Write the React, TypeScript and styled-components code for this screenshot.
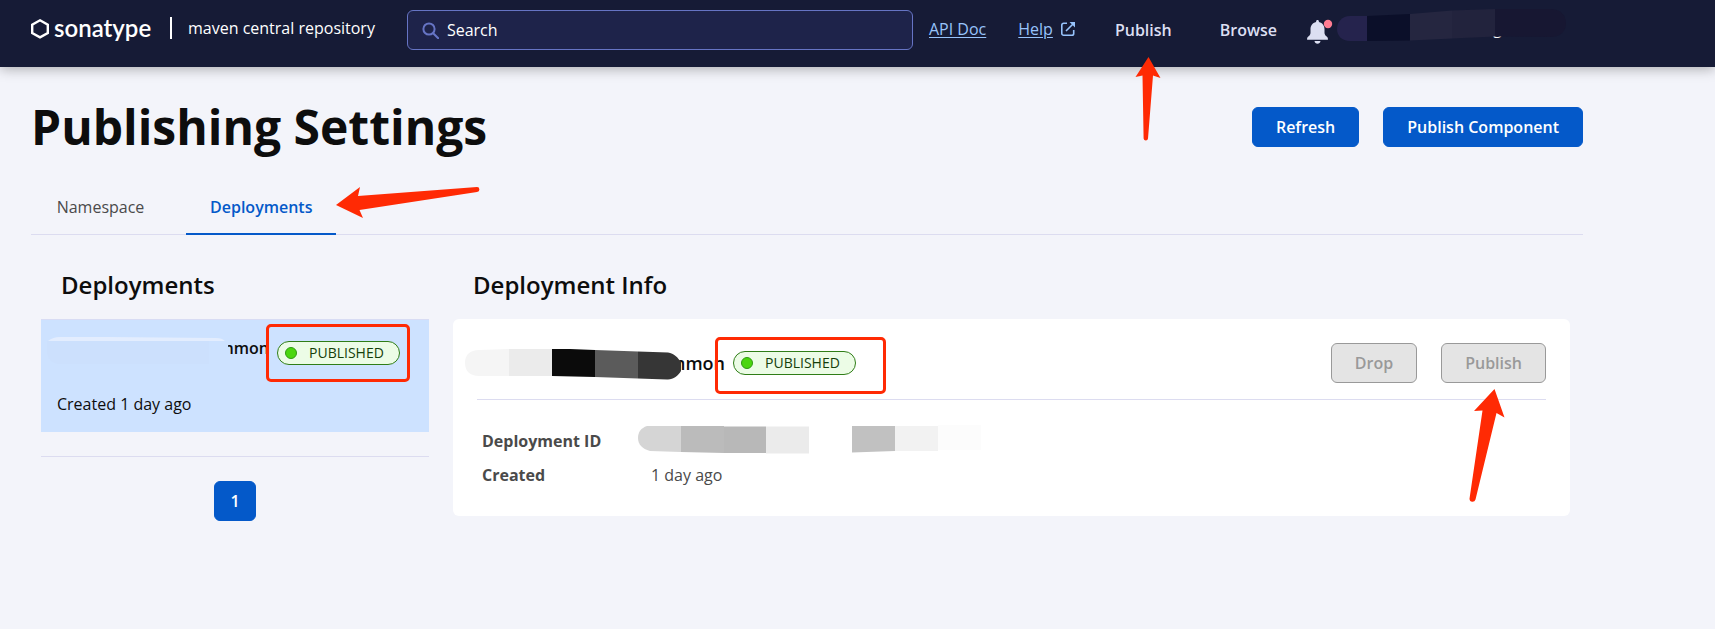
import React from "react";
import styled, { createGlobalStyle, css } from "styled-components";

const GlobalStyle = createGlobalStyle`
  *, *::before, *::after { box-sizing: border-box; }
  body {
    margin: 0;
    background: #f3f4fa;
    color: #0d0d0d;
    font-family: "Open Sans", "Noto Sans", sans-serif;
    font-size: 16px;
    line-height: 24px;
  }
  button, input { font: inherit; }
`;

/* ---------- Header ---------- */

const Header = styled.header`
  position: relative;
  z-index: 1;
  display: flex;
  align-items: flex-start;
  padding: 10px 132px 17px 31px;
  background: #161b36;
  box-shadow: 0 2px 12px rgba(0, 0, 0, 0.3);
  white-space: nowrap;
`;

const Brand = styled.a`
  display: flex;
  align-items: center;
  height: 36px;
  color: #fff;
  font-weight: 500;
  text-decoration: none;
`;

const BrandName = styled.span`
  width: 100px;
  margin-left: 5px;
  font-family: Lato, "Open Sans", sans-serif;
  font-size: 24px;
  font-weight: 600;
  line-height: 28px;
`;

const BrandDivider = styled.span`
  width: 2px;
  height: 22px;
  margin: 0 16px;
  background: #fff;
`;

const SearchBox = styled.label`
  display: flex;
  flex: 1;
  align-items: center;
  gap: 8px;
  min-width: 120px;
  height: 40px;
  margin-left: 32px;
  padding: 0 14px;
  border: 1px solid #6674c4;
  border-radius: 6px;
  background: #1e234a;
`;

const SearchInput = styled.input`
  flex: 1;
  min-width: 0;
  padding: 0;
  border: 0;
  outline: 0;
  background: transparent;
  color: #fff;
  font-weight: 500;
  &::placeholder { color: #fff; opacity: 1; }
`;

const Links = styled.div`
  display: flex;
  align-items: center;
  gap: 32px;
  height: 38px;
  margin-left: 16px;
`;

const TextLink = styled.a`
  color: #97c3fb;
  text-underline-offset: 2px;
`;

const HelpLink = styled.span`
  display: flex;
  align-items: center;
  gap: 8px;
`;

const Nav = styled.nav`
  display: flex;
  align-items: center;
  gap: 48px;
  height: 40px;
  margin-left: 40px;
`;

const NavLink = styled.a`
  position: relative;
  color: #dcdff2;
  font-weight: 600;
  text-decoration: none;
`;

const BellButton = styled.button`
  width: 30px;
  height: 32px;
  margin: 6px 0 0 29px;
  padding: 0;
  border: 0;
  background: none;
  svg { display: block; }
`;

const Account = styled.div`
  position: relative;
  width: 247px;
  height: 40px;
  padding: 6px 0 0 157px;
  color: #fff;
  svg { position: absolute; top: -2px; left: 0; }
`;

/* ---------- Page head and tabs ---------- */

const Main = styled.main`
  padding: 28px 132px 48px 31px;
`;

const PageHead = styled.div`
  display: flex;
  align-items: center;
  justify-content: space-between;
`;

const PageTitle = styled.h1`
  margin: 0;
  font-size: 48px;
  font-weight: 700;
  line-height: 64px;
`;

const ButtonRow = styled.div`
  display: flex;
  gap: 24px;
`;

const Button = styled.button`
  position: relative;
  height: 40px;
  padding: 0 23px;
  border: 1px solid #0459c9;
  border-radius: 6px;
  background: #0459c9;
  color: #fff;
  font-weight: 600;
  white-space: nowrap;
  &:disabled {
    border-color: #999;
    background: #e4e4e4;
    color: #999;
  }
`;

const PageButton = styled(Button)`
  width: 42px;
  padding: 0;
`;

const Tabs = styled.div`
  display: flex;
  gap: 16px;
  margin-top: 20px;
  border-bottom: 1px solid #dcdcf0;
`;

const Tab = styled.button<{ $active?: boolean }>`
  position: relative;
  min-width: 139px;
  margin-bottom: -1px;
  padding: 16px 24px 14px;
  border: 0;
  border-bottom: 2px solid transparent;
  background: none;
  color: #4a4a4a;
  ${({ $active }) =>
    $active &&
    css`
      border-color: #0459c9;
      color: #0459c9;
      font-weight: 600;
    `}
`;

/* ---------- Deployments ---------- */

const Columns = styled.div`
  display: grid;
  grid-template-columns: 388px minmax(0, 1fr);
  gap: 24px;
  margin-top: 34px;
  padding: 0 13px 0 10px;
`;

const SectionTitle = styled.h2`
  margin: 0 0 18px;
  padding-left: 20px;
  font-size: 24px;
  font-weight: 600;
  line-height: 32px;
`;

const List = styled.ul`
  margin: 0;
  padding: 0 0 24px;
  border-top: 1px solid #d8dcf4;
  border-bottom: 1px solid #dcdcf0;
  list-style: none;
`;

const Item = styled.li`
  padding: 16px;
  background: #cde2ff;
`;

const ItemHead = styled.div`
  display: flex;
  align-items: flex-start;
  gap: 8px;
  height: 34px;
  margin-bottom: 22px;
`;

const Name = styled.div<{ $large?: boolean }>`
  position: relative;
  flex: none;
  width: ${({ $large }) => ($large ? 248 : 212)}px;
  font-size: ${({ $large }) => ($large ? 18 : 16)}px;
  font-weight: 600;
  text-align: right;
`;

const Mask = styled.svg<{ $x: number; $y: number }>`
  position: absolute;
  left: ${({ $x }) => $x}px;
  top: ${({ $y }) => $y}px;
`;

const BadgeSlot = styled.div`
  position: relative;
  align-self: center;
`;

const Badge = styled.span`
  display: flex;
  align-items: center;
  gap: 12px;
  width: 123px;
  height: 24px;
  padding-left: 7px;
  border: 1px solid #2f7d17;
  border-radius: 12px;
  background: #ecfce6;
  color: #15400a;
  font-size: 14px;
  line-height: 20px;
  &::before {
    content: "";
    width: 12px;
    height: 12px;
    border: 1px solid #2f9a12;
    border-radius: 50%;
    background: #4bd60f;
  }
`;

const Highlight = styled.span<{ $wide?: boolean }>`
  position: absolute;
  top: ${({ $wide }) => ($wide ? -14 : -17)}px;
  left: ${({ $wide }) => ($wide ? -18 : -11)}px;
  width: ${({ $wide }) => ($wide ? 171 : 144)}px;
  height: ${({ $wide }) => ($wide ? 57 : 58)}px;
  border: 3px solid #ff2a04;
  border-radius: 5px;
  pointer-events: none;
`;

const Arrow = styled.svg<{ $x: number; $y: number }>`
  position: absolute;
  left: ${({ $x }) => $x}px;
  top: ${({ $y }) => $y}px;
  z-index: 2;
  fill: #ff2a04;
  pointer-events: none;
`;

const Pagination = styled.nav`
  display: flex;
  justify-content: center;
  margin-top: 24px;
`;

const Card = styled.div`
  padding: 24px 24px 0;
  border-radius: 6px;
  background: #fff;
`;

const CardHead = styled.div`
  display: flex;
  align-items: center;
  gap: 8px;
  padding-bottom: 16px;
  border-bottom: 1px solid #dcdcf0;
  ${ButtonRow} { margin-left: auto; }
`;

const Details = styled.dl`
  display: grid;
  grid-template-columns: 169px 1fr;
  row-gap: 10px;
  margin: 0;
  padding: 29px 5px;
  color: #4a4a4a;
  dt { font-weight: 700; }
  dd { position: relative; margin: 0; }
`;

/* ---------- Icons ---------- */

const HexIcon = () => (
  <svg width="18" height="22" viewBox="0 0 18 22" fill="none" stroke="#fff" strokeWidth="2.4" aria-hidden="true">
    <path d="M9 3.300 16.800 7.600v8.500L9 20.400 1.200 16.100V7.600Z" />
  </svg>
);

const SearchIcon = () => (
  <svg width="17" height="17" viewBox="0 0 17 17" fill="none" stroke="#6674c4" strokeWidth="2" aria-hidden="true">
    <circle cx="7" cy="7" r="5.6" />
    <path d="m11.2 11.2 5 5" strokeLinecap="round" />
  </svg>
);

const ExternalIcon = () => (
  <svg width="14" height="14" viewBox="0 0 14 14" fill="none" stroke="#97c3fb" strokeWidth="1.6" aria-hidden="true">
    <path d="M6 1.3H2.6A1.8 1.8 0 0 0 .8 3.1v8.3a1.8 1.8 0 0 0 1.8 1.8h8.3a1.8 1.8 0 0 0 1.8-1.8V8M5 9l7-7" />
    <path d="M8.5 0H14v5.5Z" fill="#97c3fb" stroke="none" />
  </svg>
);

const BellIcon = () => (
  <svg width="28" height="28" viewBox="0 0 28 28" aria-hidden="true">
    <path
      fill="#dcdff2"
      d="M11.500 2c.8 0 1.400.6 1.400 1.400v.6c3.800.9 5.600 3.700 5.600 7.300v3.500c0 1.600.7 2.600 2.200 3.700.8.600 1.200 1.300 1.200 2.100v1.200H1.100v-1.200c0-.8.400-1.500 1.200-2.100 1.500-1.100 2.200-2.100 2.200-3.700v-3.500c0-3.600 1.800-6.400 5.600-7.300v-.6c0-.8.600-1.400 1.400-1.400ZM8.500 23h6c-.3 1.800-1.400 2.800-3 2.800s-2.700-1-3-2.800Z"
    />
    <circle cx="22" cy="6" r="4.200" fill="#ff7c92" />
  </svg>
);

export default function App() {
  return (
    <>
      <GlobalStyle />
      <Header>
        <Brand href="#home">
          <HexIcon />
          <BrandName>sonatype</BrandName>
          <BrandDivider />
          maven central repository
        </Brand>
        <SearchBox>
          <SearchIcon />
          <SearchInput type="text" placeholder="Search" aria-label="Search" />
        </SearchBox>
        <Links>
          <TextLink href="#api">API Doc</TextLink>
          <HelpLink>
            <TextLink href="#help">Help</TextLink>
            <ExternalIcon />
          </HelpLink>
        </Links>
        <Nav>
          <NavLink href="#publish">
            Publish
            <Arrow $x={20} $y={39} width="26" height="84" viewBox="0 0 26 84">
              <path d="M13.500 0 25.500 21 18 18.500 13 81.500q-.3 1.900-2.200 1.900T8.600 81.500L7.500 18.500.500 20Z" />
            </Arrow>
          </NavLink>
          <NavLink href="#browse">Browse</NavLink>
        </Nav>
        <BellButton type="button" aria-label="Notifications">
          <BellIcon />
        </BellButton>
        <Account>
          g
          <svg width="232" height="36" viewBox="0 0 232 36" aria-hidden="true">
            <path fill="#25234d" d="M14 8H32V33H14C6 33 1 28 1 21S6 8 14 8Z" />
            <path fill="#0b0f29" d="M31 8 74 6V32.500L31 33Z" />
            <path fill="#252640" d="M74 6 116 2.500V30.500L74 32.500Z" />
            <path fill="#22233d" d="M116 2.500 159 1V28.500L116 30.500Z" />
            <path fill="#171732" d="M159 1H214C224 1 230 7 230 15S225 29 214 29L159 28.500Z" />
          </svg>
        </Account>
      </Header>

      <Main>
        <PageHead>
          <PageTitle>Publishing Settings</PageTitle>
          <ButtonRow>
            <Button type="button">Refresh</Button>
            <Button type="button">Publish Component</Button>
          </ButtonRow>
        </PageHead>

        <Tabs role="tablist">
          <Tab type="button" role="tab" aria-selected="false">Namespace</Tab>
          <Tab type="button" role="tab" aria-selected="true" $active>
            Deployments
            <Arrow $x={150} $y={8} width="144" height="32" viewBox="0 0 144 32">
              <path d="M0 18 24 0 22 9 141 0q2.400 0 2.400 2.400T141 5L23.500 23 27 31Z" />
            </Arrow>
          </Tab>
        </Tabs>

        <Columns>
          <section>
            <SectionTitle>Deployments</SectionTitle>
            <List>
              <Item>
                <ItemHead>
                  <Name>
                    mmon
                    <Mask $x={-11} $y={0} width="182" height="30" viewBox="0 0 182 30" aria-hidden="true">
                      <path fill="#cde2ff" d="M0 0H182V30H0Z" />
                      <path fill="#e3edfe" d="M2 5Q7 1 14 1L60 1 170 2Q176 2 179 5Z" />
                      <path fill="#cce0fd" d="M1 5H163V28H12Q1 26 1 14Z" />
                    </Mask>
                  </Name>
                  <BadgeSlot>
                    <Badge>PUBLISHED</Badge>
                    <Highlight />
                  </BadgeSlot>
                </ItemHead>
                Created 1 day ago
              </Item>
            </List>
            <Pagination aria-label="Deployments pages">
              <PageButton type="button">1</PageButton>
            </Pagination>
          </section>

          <section>
            <SectionTitle>Deployment Info</SectionTitle>
            <Card>
              <CardHead>
                <Name $large>
                  mmon
                  <Mask $x={-12} $y={-2} width="217" height="31" viewBox="0 0 217 31" aria-hidden="true">
                    <path fill="#f5f5f5" d="M14 1 44 0V27H14C5 27 0 22 0 14S5 1 14 1Z" />
                    <path fill="#ebebeb" d="M44 0H87V27H44Z" />
                    <path fill="#0b0b0b" d="M87 0H105L130 1V28L87 27Z" />
                    <path fill="#5b5b5b" d="M130 1 173 2.500V29.500L130 28Z" />
                    <path fill="#363636" d="M173 2.500 203 3.500C209 4 213 9 216 13V22C213 27 208 31 202 30.500L173 29.500Z" />
                  </Mask>
                </Name>
                <BadgeSlot>
                  <Badge>PUBLISHED</Badge>
                  <Highlight $wide />
                </BadgeSlot>
                <ButtonRow>
                  <Button type="button" disabled>Drop</Button>
                  <Button type="button" disabled>
                    Publish
                    <Arrow $x={27} $y={45} width="36" height="114" viewBox="0 0 36 114">
                      <path d="M25.500 0 35.500 28.500 27.500 24 6.500 110.500q-.8 2.500-3.300 2.300T.500 109.800L13.500 21.500 5 22Z" />
                    </Arrow>
                  </Button>
                </ButtonRow>
              </CardHead>
              <Details>
                <dt>Deployment ID</dt>
                <dd>
                  <Mask $x={-13} $y={-5} width="344" height="31" viewBox="0 0 344 31" aria-hidden="true">
                    <path fill="#d5d5d5" d="M9 2H43V28L12 27C4 25 0 20 0 14S3 4 9 2Z" />
                    <path fill="#bbb" d="M43 2H86V29L43 28Z" />
                    <path fill="#b8b8b8" d="M86 2.500H128V29H86Z" />
                    <path fill="#ebebeb" d="M128 2.500H171V29.500H128Z" />
                    <path fill="#c1c1c1" d="M214 2H257V27L214 28.500Z" />
                    <path fill="#f2f2f2" d="M257 2H300V27H257Z" />
                    <path fill="#fcfcfc" d="M300 1H343V26H300Z" />
                  </Mask>
                </dd>
                <dt>Created</dt>
                <dd>1 day ago</dd>
              </Details>
            </Card>
          </section>
        </Columns>
      </Main>
    </>
  );
}
